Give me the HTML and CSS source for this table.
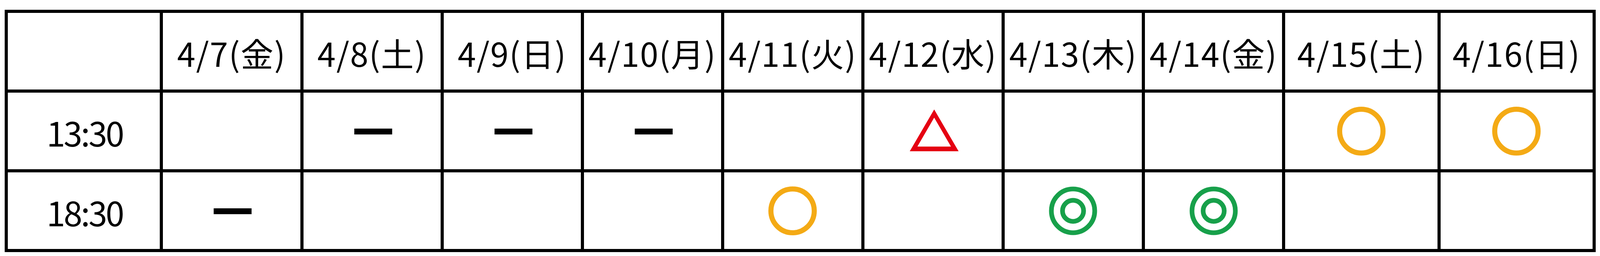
FILE: index.html
```html
<!DOCTYPE html>
<html lang="ja">
<head>
<meta charset="utf-8">
<title>スケジュール</title>
<link rel="stylesheet" href="styles.css">
</head>
<body>
<div class="schedule">
  <div class="cell"></div>
  <div class="cell head">4/7(金)</div>
  <div class="cell head">4/8(土)</div>
  <div class="cell head">4/9(日)</div>
  <div class="cell head">4/10(月)</div>
  <div class="cell head">4/11(火)</div>
  <div class="cell head">4/12(水)</div>
  <div class="cell head">4/13(木)</div>
  <div class="cell head">4/14(金)</div>
  <div class="cell head">4/15(土)</div>
  <div class="cell head">4/16(日)</div>

  <div class="cell time">13:30</div>
  <div class="cell"></div>
  <div class="cell"><span class="dash" role="img" aria-label="ー"></span></div>
  <div class="cell"><span class="dash" role="img" aria-label="ー"></span></div>
  <div class="cell"><span class="dash" role="img" aria-label="ー"></span></div>
  <div class="cell"></div>
  <div class="cell">
    <svg class="mark tri" viewBox="0 0 125 107" role="img" aria-label="△"><path fill-rule="evenodd" d="M0 107 L62.5 0 L125 107 Z M19.5 95 L105.5 95 L62.5 21 Z"/></svg>
  </div>
  <div class="cell"></div>
  <div class="cell"></div>
  <div class="cell">
    <svg class="mark circle" viewBox="0 0 124 125" role="img" aria-label="○"><ellipse cx="62" cy="62.5" rx="55.5" ry="56" /></svg>
  </div>
  <div class="cell">
    <svg class="mark circle" viewBox="0 0 124 125" role="img" aria-label="○"><ellipse cx="62" cy="62.5" rx="55.5" ry="56" /></svg>
  </div>

  <div class="cell time">18:30</div>
  <div class="cell"><span class="dash" role="img" aria-label="ー"></span></div>
  <div class="cell"></div>
  <div class="cell"></div>
  <div class="cell"></div>
  <div class="cell">
    <svg class="mark circle" viewBox="0 0 124 125" role="img" aria-label="○"><ellipse cx="62" cy="62.5" rx="55.5" ry="56" /></svg>
  </div>
  <div class="cell"></div>
  <div class="cell">
    <svg class="mark double" viewBox="0 0 124 125" role="img" aria-label="◎"><ellipse cx="62" cy="62.5" rx="55.5" ry="56" /><circle cx="62" cy="62.5" r="27" /></svg>
  </div>
  <div class="cell">
    <svg class="mark double" viewBox="0 0 124 125" role="img" aria-label="◎"><ellipse cx="62" cy="62.5" rx="55.5" ry="56" /><circle cx="62" cy="62.5" r="27" /></svg>
  </div>
  <div class="cell"></div>
  <div class="cell"></div>
</div>
</body>
</html>
```
FILE: styles.css
```css
html, body {
  margin: 0;
  padding: 0;
  background: #fff;
}

body {
  font-family: "Noto Sans CJK JP", "Noto Sans", sans-serif;
  color: #000;
}

.schedule {
  display: grid;
  grid-template-columns: 406fr repeat(8, 366fr) 406fr 406fr;
  grid-template-rows: repeat(3, 196px);
  gap: 8px;
  padding: 8px;
  background: #000;
  margin: 25px 11px 0 12px;
}

.cell {
  background: #fff;
  display: flex;
  align-items: center;
  justify-content: center;
  line-height: 1;
  min-width: 0;
}

.head {
  font-size: 84px;
  letter-spacing: 2px;
  padding-top: 8px;
  white-space: nowrap;
}

.time {
  font-size: 86px;
  letter-spacing: -4px;
  padding-top: 6px;
  padding-left: 4px;
}

.dash {
  display: block;
  width: 97px;
  height: 15px;
  background: #000;
  margin-left: 6px;
  margin-top: 2px;
}

.mark {
  display: block;
  width: 124px;
  height: 125px;
}

.tri {
  width: 125px;
  height: 107px;
  fill: #e50012;
  margin-top: -4px;
  margin-left: 6px;
}

.circle ellipse {
  fill: none;
  stroke: #f4aa15;
  stroke-width: 13;
}

.double ellipse,
.double circle {
  fill: none;
  stroke: #17a04a;
  stroke-width: 12;
}
```
